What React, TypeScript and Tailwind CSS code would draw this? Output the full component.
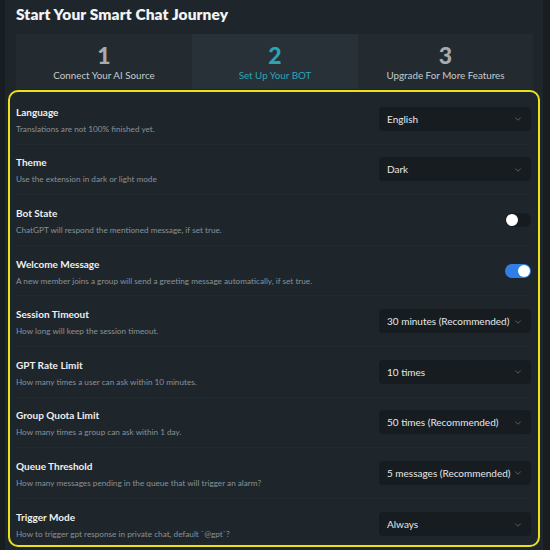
import { ChevronDown } from 'lucide-react';

type Row = {
  title: string;
  desc: string;
  select?: string;
  toggle?: boolean;
};

const rows: Row[] = [
  { title: 'Language', desc: 'Translations are not 100% finished yet.', select: 'English' },
  { title: 'Theme', desc: 'Use the extension in dark or light mode', select: 'Dark' },
  { title: 'Bot State', desc: 'ChatGPT will respond the mentioned message, if set true.', toggle: false },
  {
    title: 'Welcome Message',
    desc: 'A new member joins a group will send a greeting message automatically, if set true.',
    toggle: true,
  },
  { title: 'Session Timeout', desc: 'How long will keep the session timeout.', select: '30 minutes (Recommended)' },
  { title: 'GPT Rate Limit', desc: 'How many times a user can ask within 10 minutes.', select: '10 times' },
  { title: 'Group Quota Limit', desc: 'How many times a group can ask within 1 day.', select: '50 times (Recommended)' },
  {
    title: 'Queue Threshold',
    desc: 'How many messages pending in the queue that will trigger an alarm?',
    select: '5 messages (Recommended)',
  },
  { title: 'Trigger Mode', desc: 'How to trigger gpt response in private chat, default `@gpt`?', select: 'Always' },
];

const steps = [
  { num: '1', label: 'Connect Your AI Source', width: 'w-[176px]' },
  { num: '2', label: 'Set Up Your BOT', width: 'w-[166px]', active: true },
  { num: '3', label: 'Upgrade For More Features', width: 'w-[175px]' },
];

function Toggle({ on }: { on: boolean }) {
  return (
    <div
      className={
        on
          ? 'w-[26px] h-[14px] rounded-full bg-[#2f7fe6] flex items-center justify-end px-[1px]'
          : 'w-[26px] h-[14px] rounded-full bg-[#151b1f] flex items-center justify-start px-[1px]'
      }
    >
      <div className="w-[12px] h-[12px] rounded-full bg-white" />
    </div>
  );
}

export default function App() {
  return (
    <div className="min-h-[550px] bg-[#171d21]" style={{ fontFamily: 'Lato, "Noto Sans", sans-serif' }}>
      <div className="ml-[5px] w-[538px] h-[550px] bg-[#1e262b] overflow-hidden">
        {/* Heading */}
        <h1 className="pl-[11px] pt-[3px] h-[34px] text-[15.5px] leading-[22px] font-extrabold text-[#f1f3f4] tracking-[0.1px]">
          Start Your Smart Chat Journey
        </h1>

        {/* Steps */}
        <div className="ml-[11px] flex h-[55px]">
          {steps.map((s) => (
            <div
              key={s.num}
              className={`${s.width} flex flex-col items-center pt-[7px] ${s.active ? 'bg-[#283137]' : 'bg-[#232b30]'}`}
            >
              <span
                className={`text-[23px] leading-[28px] font-black ${s.active ? 'text-[#2ba5b5]' : 'text-[#a6acb1]'}`}
              >
                {s.num}
              </span>
              <span className={`text-[9.8px] leading-[13px] ${s.active ? 'text-[#2ba5b5]' : 'text-[#c5cacd]'}`}>
                {s.label}
              </span>
            </div>
          ))}
        </div>

        {/* Settings */}
        <div className="ml-[3px] mt-[1px] w-[532px] h-[457px] border-2 border-[#ebe01c] rounded-[10px] pl-[6px] pr-[7px] pt-[2px]">
          {rows.map((r, i) => (
            <div
              key={r.title}
              className={`h-[50.6px] flex items-center justify-between ${
                i < rows.length - 1 ? 'border-b border-[#222a30]' : ''
              }`}
            >
              <div className="flex flex-col pt-[2px]">
                <span className="text-[10px] leading-[14px] font-bold text-[#eef0f1]">{r.title}</span>
                <span className="mt-[4px] text-[8.2px] leading-[12px] text-[#899197]">{r.desc}</span>
              </div>
              {r.select !== undefined ? (
                <div className="w-[152px] h-[24px] shrink-0 rounded-[4px] bg-[#161c20] flex items-center justify-between pl-[8px] pr-[8px] pt-[1px]">
                  <span className="text-[10px] whitespace-nowrap text-[#e6e8ea]">{r.select}</span>
                  <ChevronDown size={10} strokeWidth={1.5} className="shrink-0 text-[#7d868c]" />
                </div>
              ) : (
                <Toggle on={!!r.toggle} />
              )}
            </div>
          ))}
        </div>
      </div>
    </div>
  );
}
